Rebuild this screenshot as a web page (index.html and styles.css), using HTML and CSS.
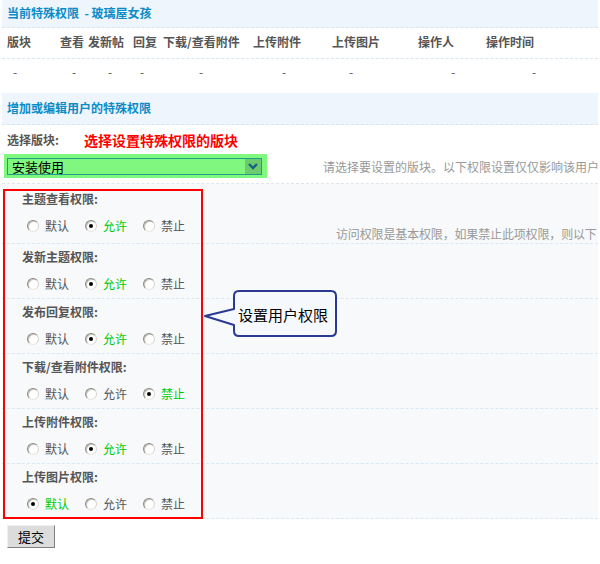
FILE: index.html
```html
<!DOCTYPE html>
<html lang="zh-CN">
<head>
<meta charset="utf-8">
<title>特殊权限</title>
<link rel="stylesheet" href="styles.css">
</head>
<body>
<div class="page">
  <div class="sec-title">当前特殊权限 &nbsp;- 玻璃屋女孩</div>
  <div class="thead">
    <span>版块</span><span>查看</span><span>发新帖</span><span>回复</span><span>下载/查看附件</span><span>上传附件</span><span>上传图片</span><span>操作人</span><span>操作时间</span>
  </div>
  <div class="tdata">
    <span>-</span><span>-</span><span>-</span><span>-</span><span>-</span><span>-</span><span>-</span><span>-</span><span>-</span>
  </div>
  <div class="sec-title sec2">增加或编辑用户的特殊权限</div>
  <div class="choose">
    <div class="choose-left">
      <div class="choose-label"><b>选择版块:</b><span class="red">选择设置特殊权限的版块</span></div>
      <div class="select-hl">
        <div class="select">安装使用
          <span class="arrow"><svg width="16" height="15" viewBox="0 0 16 15"><path d="M4 5 L8 9 L12 5" fill="none" stroke="#1a5f88" stroke-width="2.4"/></svg></span>
        </div>
      </div>
    </div>
    <div class="help help-choose">请选择要设置的版块。以下权限设置仅仅影响该用户</div>
  </div>

  <div class="perms">
    <div class="prow first">
      <div class="pleft">
        <div class="ptitle">主题查看权限:</div>
        <div class="radios">
          <label class="opt"><span class="rad"></span>默认</label>
          <label class="opt on"><span class="rad"></span>允许</label>
          <label class="opt"><span class="rad"></span>禁止</label>
        </div>
      </div>
      <div class="help help-perm">访问权限是基本权限，如果禁止此项权限，则以下</div>
    </div>
    <div class="prow">
      <div class="pleft">
        <div class="ptitle">发新主题权限:</div>
        <div class="radios">
          <label class="opt"><span class="rad"></span>默认</label>
          <label class="opt on"><span class="rad"></span>允许</label>
          <label class="opt"><span class="rad"></span>禁止</label>
        </div>
      </div>
    </div>
    <div class="prow">
      <div class="pleft">
        <div class="ptitle">发布回复权限:</div>
        <div class="radios">
          <label class="opt"><span class="rad"></span>默认</label>
          <label class="opt on"><span class="rad"></span>允许</label>
          <label class="opt"><span class="rad"></span>禁止</label>
        </div>
      </div>
    </div>
    <div class="prow">
      <div class="pleft">
        <div class="ptitle">下载/查看附件权限:</div>
        <div class="radios">
          <label class="opt"><span class="rad"></span>默认</label>
          <label class="opt"><span class="rad"></span>允许</label>
          <label class="opt on"><span class="rad"></span>禁止</label>
        </div>
      </div>
    </div>
    <div class="prow">
      <div class="pleft">
        <div class="ptitle">上传附件权限:</div>
        <div class="radios">
          <label class="opt"><span class="rad"></span>默认</label>
          <label class="opt on"><span class="rad"></span>允许</label>
          <label class="opt"><span class="rad"></span>禁止</label>
        </div>
      </div>
    </div>
    <div class="prow">
      <div class="pleft">
        <div class="ptitle">上传图片权限:</div>
        <div class="radios">
          <label class="opt on"><span class="rad"></span>默认</label>
          <label class="opt"><span class="rad"></span>允许</label>
          <label class="opt"><span class="rad"></span>禁止</label>
        </div>
      </div>
    </div>

    <div class="redbox"></div>
    <svg class="callout" width="136" height="50" viewBox="0 0 136 50">
      <path d="M36 2 H128 Q133 2 133 7 V42 Q133 47 128 47 H36 Q31 47 31 42 V36 L2 27 L31 20 V7 Q31 2 36 2 Z" fill="#f5f8fd" stroke="#2b3990" stroke-width="2" stroke-linejoin="round"/>
      <text x="35" y="32" class="callout-text">设置用户权限</text>
    </svg>
  </div>

  <div class="submit-row"><button class="btn">提交</button></div>
</div>
</body>
</html>
```
FILE: styles.css
```css
* { box-sizing: border-box; }
html, body { margin: 0; padding: 0; background: #fff; }
body {
  font-family: "Noto Sans CJK SC", "DejaVu Sans", sans-serif;
  font-size: 12px;
  color: #555;
  width: 600px;
  overflow: hidden;
}
.page {
  margin: 0 2px;
  width: 596px;
  overflow: hidden;
}
.sec-title {
  height: 28px;
  line-height: 26px;
  padding-left: 5px;
  background: #eef5fd;
  color: #0b8cc6;
  font-weight: bold;
  border-bottom: 1px dashed #d6e6f3;
  white-space: nowrap;
}
.thead {
  display: grid;
  grid-template-columns: 53px 28px 45px 30px 90px 79px 86px 68px auto;
  height: 31px;
  line-height: 28px;
  padding-left: 5px;
  font-weight: bold;
  color: #555;
  border-bottom: 1px dashed #d6e6f3;
  white-space: nowrap;
}
.tdata {
  display: grid;
  grid-template-columns: 59px 36px 32px 59px 83px 67px 102px 81px auto;
  height: 34px;
  padding-top: 4px;
  line-height: 18px;
  padding-left: 11px;
  color: #555;
}
.sec2 {
  height: 32px;
  line-height: 30px;
}
.choose {
  display: grid;
  grid-template-columns: 321px auto;
  height: 59px;
  border-bottom: 1px dashed #dde5ec;
  white-space: nowrap;
}
.choose-left { padding: 5px 0 0 5px; }
.choose-label { line-height: 18px; }
.choose-label b { color: #555; }
.red {
  color: #ff0000;
  font-weight: bold;
  font-size: 14px;
  margin-left: 25px;
  position: relative;
  top: 1px;
}
.select-hl {
  margin: 5px 0 0 -3px;
  width: 263px;
  height: 24px;
  background: #80f880;
  padding: 4px 5px 3px 3px;
}
.select {
  height: 17px;
  border: 1px solid #1f9e86;
  line-height: 15px;
  font-size: 13px;
  color: #000;
  padding-left: 4px;
  display: flex;
  justify-content: space-between;
  align-items: center;
}
.arrow {
  width: 16px;
  height: 15px;
  background: #6ccb6c;
  display: flex;
  align-items: center;
  justify-content: center;
}
.help {
  color: #999;
  white-space: nowrap;
  line-height: 18px;
}
.help-choose { padding-top: 33px; }
.perms {
  position: relative;
  background: #f7f9fb;
}
.prow {
  display: grid;
  grid-template-columns: 334px auto;
  height: 55px;
  padding-top: 4px;
  border-bottom: 1px dashed #dbe8f3;
  white-space: nowrap;
}
.prow.first { height: 60px; padding-top: 6px; }
.pleft { padding-left: 20px; }
.ptitle { line-height: 18px; font-weight: bold; color: #555; }
.help-perm { padding-top: 35px; letter-spacing: -0.15px; }
.radios {
  display: flex;
  margin-top: 9px;
  padding-left: 5px;
  line-height: 18px;
}
.opt {
  display: flex;
  align-items: center;
  width: 58px;
  color: #555;
}
.opt.on { color: #00cc00; }
.rad {
  width: 12px;
  height: 12px;
  border-radius: 50%;
  border: 1px solid;
  border-color: #8c8a84 #d8d4ca #e8e6df #8c8a84;
  background: #fff;
  margin-right: 6px;
  position: relative;
  box-shadow: inset 1px 1px 0 #c8c4bc;
}
.opt.on .rad::after {
  content: "";
  position: absolute;
  left: 3px;
  top: 3px;
  width: 4px;
  height: 4px;
  border-radius: 50%;
  background: #000;
}
.redbox {
  position: absolute;
  left: 1px;
  top: 5px;
  width: 200px;
  height: 330px;
  border: 2px solid #ff0000;
  pointer-events: none;
}
.callout {
  position: absolute;
  left: 201px;
  top: 105px;
}
.callout-text {
  font-family: "Noto Sans CJK SC", sans-serif;
  font-size: 15px;
  fill: #000;
}
.submit-row { padding: 6px 0 0 5px; height: 45px; }
.btn {
  width: 48px;
  height: 23px;
  background: #dcdcdc;
  border: 1px solid;
  border-color: #f0f0f0 #808080 #808080 #f0f0f0;
  font-family: "Noto Sans CJK SC", sans-serif;
  font-size: 13px;
  color: #000;
  padding: 0;
  line-height: 20px;
}
```
